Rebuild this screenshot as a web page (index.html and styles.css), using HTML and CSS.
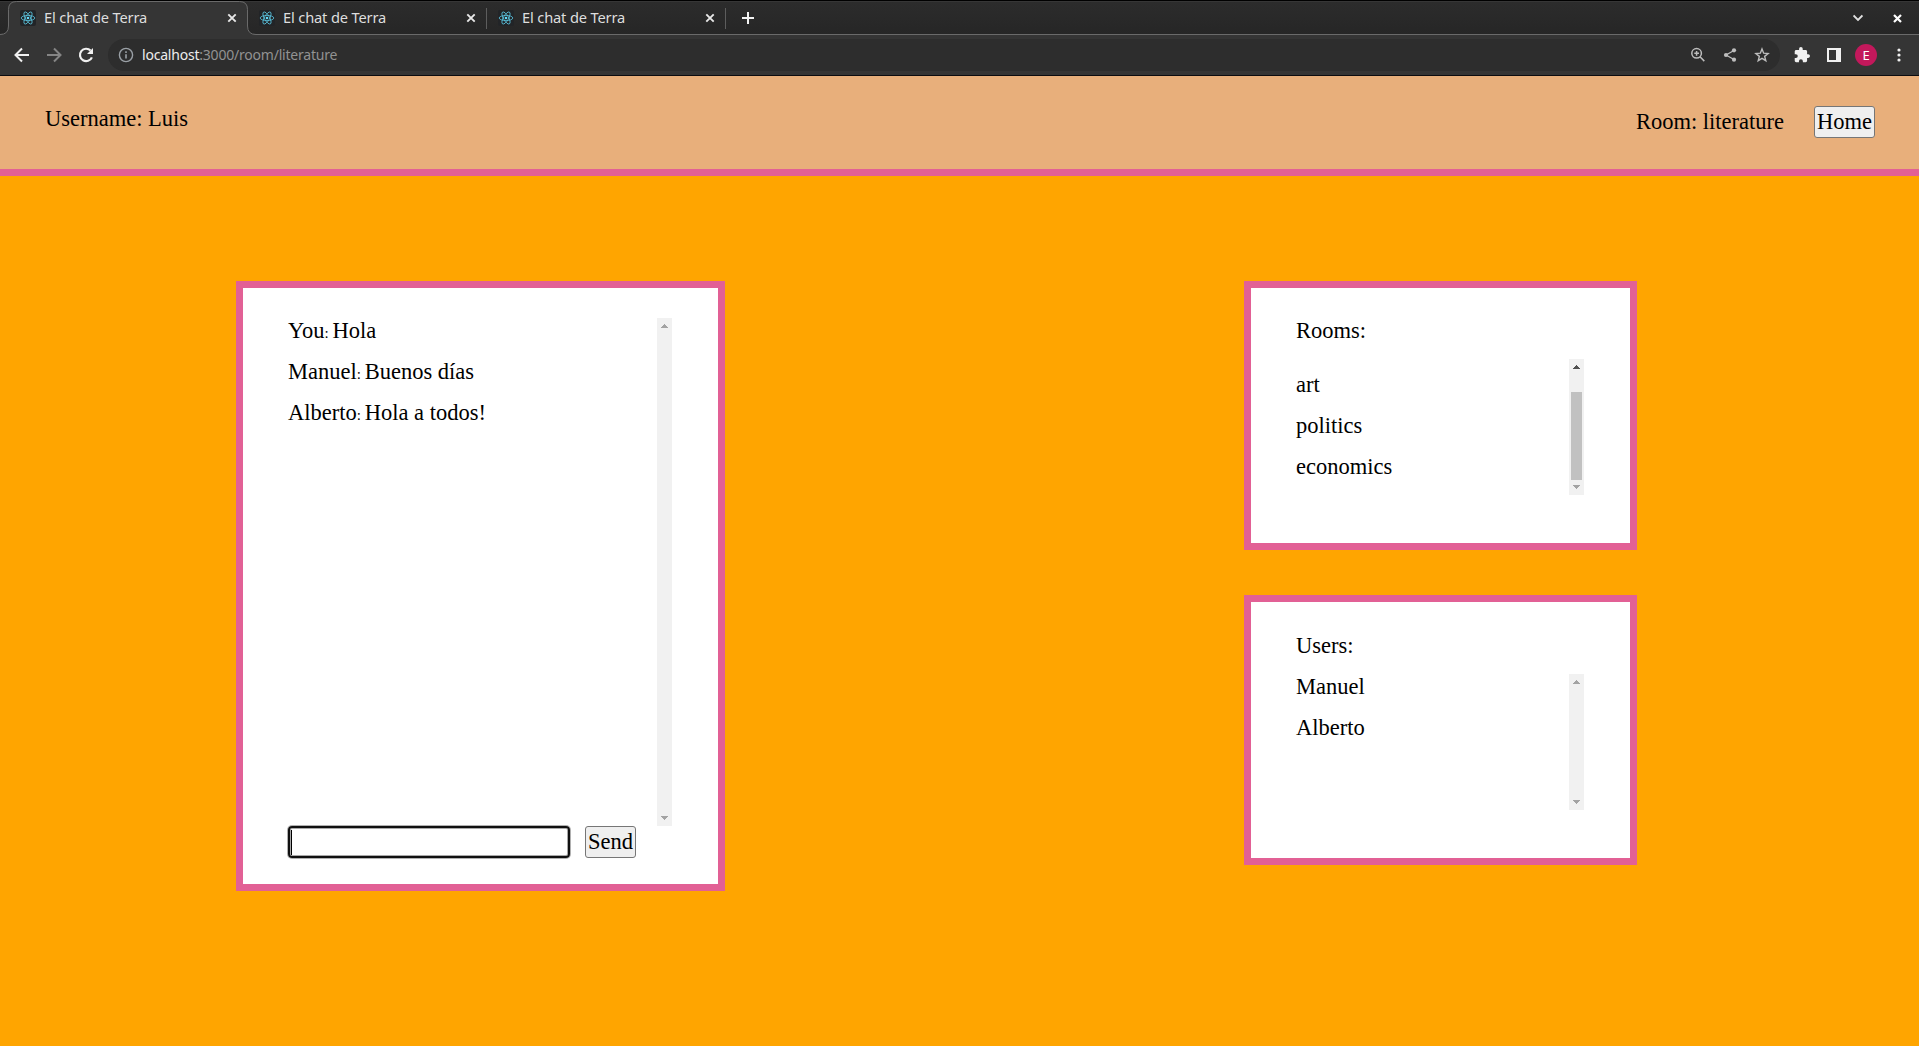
FILE: index.html
```html
<!DOCTYPE html>
<html lang="es">
<head>
<meta charset="utf-8">
<title>El chat de Terra</title>
<link rel="stylesheet" href="styles.css">
</head>
<body>
<svg class="defs" width="0" height="0" aria-hidden="true">
  <symbol id="react" viewBox="0 0 16 16">
    <rect width="16" height="16" rx="2" fill="#222427"/>
    <g fill="none" stroke="#58bcd6" stroke-width=".85">
      <ellipse cx="8" cy="8" rx="6.8" ry="2.6"/>
      <ellipse cx="8" cy="8" rx="6.8" ry="2.6" transform="rotate(60 8 8)"/>
      <ellipse cx="8" cy="8" rx="6.8" ry="2.6" transform="rotate(120 8 8)"/>
    </g>
    <circle cx="8" cy="8" r="1.3" fill="#61dafb"/>
  </symbol>
  <symbol id="close" viewBox="0 0 10 10"><path d="M1.3 1.3l7.4 7.4M8.7 1.3L1.3 8.7" stroke="#e8e8e8" stroke-width="1.9"/></symbol>
  <symbol id="up" viewBox="0 0 15 15"><path d="M7 6h1v1h1v1h1v1h1v1H4V9h1V8h1V7h1z" fill="currentColor"/></symbol>
  <symbol id="down" viewBox="0 0 15 15"><path d="M4 5h7v1h-1v1H9v1H8v1H7V8H6V7H5V6H4z" fill="currentColor"/></symbol>
</svg>

<div class="browser">
  <div class="tabs">
    <div class="tab tab-active">
      <svg class="tab-edge" width="256" height="35" viewBox="0 0 256 35"><path d="M0 34.5Q8.500 34.500 8.500 26V9.500Q8.500 1.500 16.500 1.500H239.500Q247.500 1.500 247.500 9.500V26Q247.500 34.500 256 34.500V35H0z" fill="#353535"/><path d="M0 34.5Q8.500 34.500 8.500 26V9.500Q8.500 1.500 16.500 1.500H239.500Q247.500 1.500 247.500 9.500V26Q247.500 34.500 256 34.500" fill="none" stroke="#6a6a6a"/></svg>
      <svg class="favicon"><use href="#react"/></svg><span class="tab-title">El chat de Terra</span><svg class="tab-close"><use href="#close"/></svg>
    </div>
    <div class="tab">
      <svg class="favicon"><use href="#react"/></svg><span class="tab-title">El chat de Terra</span><svg class="tab-close"><use href="#close"/></svg>
    </div>
    <div class="tab">
      <svg class="favicon"><use href="#react"/></svg><span class="tab-title">El chat de Terra</span><svg class="tab-close"><use href="#close"/></svg>
    </div>
    <svg class="new-tab" viewBox="0 0 12 12"><path d="M6 0v12M0 6h12" stroke="#f2f2f2" stroke-width="2"/></svg>
    <div class="window-controls">
      <svg width="10" height="8" viewBox="0 0 10 8"><path d="M.6 1.500L5 5.900l4.400-4.400" fill="none" stroke="#e0e0e0" stroke-width="1.800"/></svg>
      <svg width="9" height="9" viewBox="0 0 9 9"><path d="M1 1l7 7M8 1L1 8" stroke="#fff" stroke-width="2.200"/></svg>
    </div>
  </div>
  <div class="toolbar">
    <div class="nav">
      <svg viewBox="0 0 16 16"><path d="M15 8H2M8 1.500L1.500 8 8 14.500" fill="none" stroke="#f0f0f0" stroke-width="2"/></svg>
      <svg viewBox="0 0 16 16"><path d="M1 8h13M8 1.500L14.500 8 8 14.500" fill="none" stroke="#858585" stroke-width="2"/></svg>
      <svg viewBox="0 0 16 16"><path d="M13.900 10.300A6.200 6.200 0 1 1 12.600 3.600" fill="none" stroke="#f0f0f0" stroke-width="2.200"/><path d="M15 1v6H9z" fill="#f0f0f0"/></svg>
    </div>
    <div class="omnibox">
      <svg class="info" viewBox="0 0 16 16"><circle cx="8" cy="8" r="6.600" fill="none" stroke="#9aa0a6" stroke-width="1.400"/><path d="M8 7.200v4.200M8 4.300V6" stroke="#9aa0a6" stroke-width="1.600"/></svg>
      <span class="url"><span class="host">localhost</span>:3000/room/literature</span>
      <div class="page-actions">
        <svg viewBox="0 0 16 16"><circle cx="6.600" cy="6.300" r="4.800" fill="none" stroke="#bdbdbd" stroke-width="1.500"/><path d="M10 9.800l4.300 4.300M6.600 4v4.700M4.300 6.300h4.700" stroke="#bdbdbd" stroke-width="1.500"/></svg>
        <svg viewBox="0 0 16 16"><path d="M12 3.500L4 8l8 4.500" fill="none" stroke="#bdbdbd" stroke-width="1.300"/><circle cx="12" cy="3.300" r="2.100" fill="#bdbdbd"/><circle cx="4" cy="8" r="2.100" fill="#bdbdbd"/><circle cx="12" cy="12.700" r="2.100" fill="#bdbdbd"/></svg>
        <svg viewBox="0 0 16 16"><path d="M8 2l1.650 4.200 4.450.300-3.450 2.850 1.150 4.350L8 11.300l-3.800 2.400 1.150-4.350L1.900 6.500l4.450-.300z" fill="none" stroke="#bdbdbd" stroke-width="1.400"/></svg>
      </div>
    </div>
    <div class="extensions">
      <svg class="puzzle" viewBox="1 1 22 22"><path d="M20.500 11H19V7c0-1.100-.900-2-2-2h-4V3.500a2.500 2.500 0 0 0-5 0V5H4c-1.100 0-2 .900-2 2v3.800h1.500a2.700 2.700 0 0 1 0 5.400H2V20c0 1.100.900 2 2 2h3.800v-1.500a2.700 2.700 0 0 1 5.400 0V22H17c1.100 0 2-.900 2-2v-4h1.500a2.500 2.500 0 0 0 0-5z" fill="#f0f0f0"/></svg>
      <svg class="panel" viewBox="0 0 14 14"><path d="M0 0h14v14H0zM2 2v10h7V2z" fill="#f0f0f0" fill-rule="evenodd"/></svg>
      <span class="avatar">E</span>
      <svg class="menu" viewBox="0 0 4 14"><g fill="#f0f0f0"><circle cx="2" cy="2" r="1.600"/><circle cx="2" cy="7" r="1.600"/><circle cx="2" cy="12" r="1.600"/></g></svg>
    </div>
  </div>
</div>

<header class="header">
  <p class="username">Username: Luis</p>
  <div class="header-right"><p>Room: literature</p><button class="button home" type="button">Home</button></div>
</header>

<main class="main">
  <section class="card chat">
    <div class="scroll-area chat-messages">
      <div class="list">
        <p>You<small>: </small>Hola</p>
        <p>Manuel<small>: </small>Buenos días</p>
        <p>Alberto<small>: </small>Hola a todos!</p>
      </div>
      <div class="scrollbar"><svg><use href="#up"/></svg><svg><use href="#down"/></svg></div>
    </div>
    <div class="composer"><div class="field"><span class="caret"></span></div><button class="button send" type="button">Send</button></div>
  </section>
  <div class="side">
    <section class="card rooms">
      <p>Rooms:</p>
      <div class="scroll-area">
        <div class="list rooms-list"><p>art</p><p>politics</p><p>economics</p></div>
        <div class="scrollbar"><svg class="enabled"><use href="#up"/></svg><span class="thumb"></span><svg><use href="#down"/></svg></div>
      </div>
    </section>
    <section class="card users">
      <p>Users:</p>
      <div class="scroll-area">
        <div class="list"><p>Manuel</p><p>Alberto</p></div>
        <div class="scrollbar"><svg><use href="#up"/></svg><svg><use href="#down"/></svg></div>
      </div>
    </section>
  </div>
</main>
</body>
</html>
```
FILE: styles.css
```css
* { box-sizing: border-box; }
body {
  margin: 0;
  height: 1046px;
  overflow: hidden;
  background: #ffa500;
  color: #000;
  font: 22.5px/26px "Liberation Serif", serif;
}
p { margin: 0; }
svg { display: block; flex: none; }
.defs { position: absolute; }

.browser {
  height: 76px;
  border-top: 1px solid #000;
  border-bottom: 1px solid #0c0c10;
  background: #353535;
  font-family: "Noto Sans", sans-serif;
}
.tabs {
  display: flex;
  height: 34px;
  padding-left: 9px;
  background: linear-gradient(#363636 0 1px, #2c2c2c 1px, #262626);
  border-bottom: 1px solid #6a6a6a;
}
.tab {
  position: relative;
  display: flex;
  align-items: center;
  width: 239px;
  height: 34px;
  padding: 0 11px;
}
.tab:not(.tab-active)::after {
  content: "";
  position: absolute;
  right: 0;
  top: 7px;
  width: 1px;
  height: 21px;
  background: #5d5d5d;
}
.tab-edge { position: absolute; left: -9px; top: -1px; }
.favicon { position: relative; width: 16px; height: 16px; }
.tab-title {
  position: relative;
  flex: 1;
  margin: -2px 0 0 8px;
  color: #dedede;
  font-size: 14.67px;
  letter-spacing: -.16px;
  line-height: 20px;
}
.tab-close { position: relative; width: 10px; height: 10px; }
.new-tab { width: 12px; height: 12px; margin: 11px 0 0 16px; }
.window-controls {
  display: flex;
  align-items: center;
  gap: 30px;
  height: 34px;
  margin-left: auto;
  padding-right: 17px;
}
.toolbar { display: flex; height: 40px; padding-top: 4px; }
.nav { display: flex; gap: 16px; padding: 8px 14px; }
.nav svg { width: 16px; height: 16px; }
.omnibox {
  display: flex;
  align-items: center;
  flex: 1;
  height: 32px;
  padding: 0 10px 0 10px;
  border-radius: 16px;
  background: #2d2d2d;
}
.info { width: 16px; height: 16px; }
.url { margin-left: 8px; color: #929292; font-size: 14px; letter-spacing: -.21px; line-height: 20px; }
.host { color: #ededed; }
.page-actions { display: flex; gap: 16px; margin-left: auto; }
.page-actions svg { width: 16px; height: 16px; }
.extensions { display: flex; align-items: center; height: 32px; padding: 0 18px 0 14px; }
.puzzle { width: 16px; height: 16px; }
.panel { width: 14px; height: 14px; margin-left: 17px; }
.avatar {
  width: 22px;
  height: 22px;
  margin-left: 14px;
  border-radius: 50%;
  background: #c2185b;
  color: #fff;
  font-size: 13px;
  line-height: 22px;
  text-align: center;
}
.menu { width: 4px; height: 14px; margin-left: 20px; }

.header {
  display: flex;
  justify-content: space-between;
  height: 100px;
  padding: 30px 44px 0 45px;
  border-bottom: 7px solid #e26095;
  background: #e8af7b;
}
.header-right { display: flex; gap: 30px; }
.header-right p { padding-top: 3px; }
.button {
  height: 32px;
  padding: 0;
  border: 1px solid #767676;
  border-radius: 3px;
  background: #efefef;
  color: #000;
  font: inherit;
}
.home { width: 61px; }
.send { width: 51px; }

.main {
  display: flex;
  justify-content: space-between;
  align-items: flex-start;
  padding: 105px 282px 0 236px;
}
.card { border: 7px solid #e26095; background: #fff; padding: 30px 45px; }
.chat { width: 489px; height: 610px; }
.side { display: flex; flex-direction: column; gap: 45px; width: 393px; }
.rooms { height: 269px; }
.users { height: 270px; padding-top: 31px; }
.list { display: flex; flex-direction: column; gap: 15px; }
.rooms-list { padding-top: 13px; }
.scroll-area { display: flex; justify-content: space-between; height: 136px; margin-top: 15px; width: 288px; }
.chat-messages { width: 384px; height: 508px; margin-top: 0; }
.chat small { font-size: 15px; line-height: 0; }
.scrollbar {
  display: flex;
  flex-direction: column;
  justify-content: space-between;
  width: 15px;
  background: #f1f1f1;
  color: #a3a3a3;
}
.scrollbar svg { width: 15px; height: 15px; }
.scrollbar .enabled { color: #505050; }
.thumb { width: 11px; height: 88px; margin: auto 2px 0; background: #c1c1c1; }
.composer { display: flex; gap: 15px; }
.field {
  width: 282px;
  height: 32px;
  padding: 4px 3px;
  border: 2px solid #101010;
  border-radius: 4px;
  box-shadow: 0 0 0 1px #b0b0b0, inset 0 0 0 1px #a8a8a8;
}
.caret { display: block; width: 1px; height: 25px; margin: -2px 0 0 -2px; background: #000; }
```
